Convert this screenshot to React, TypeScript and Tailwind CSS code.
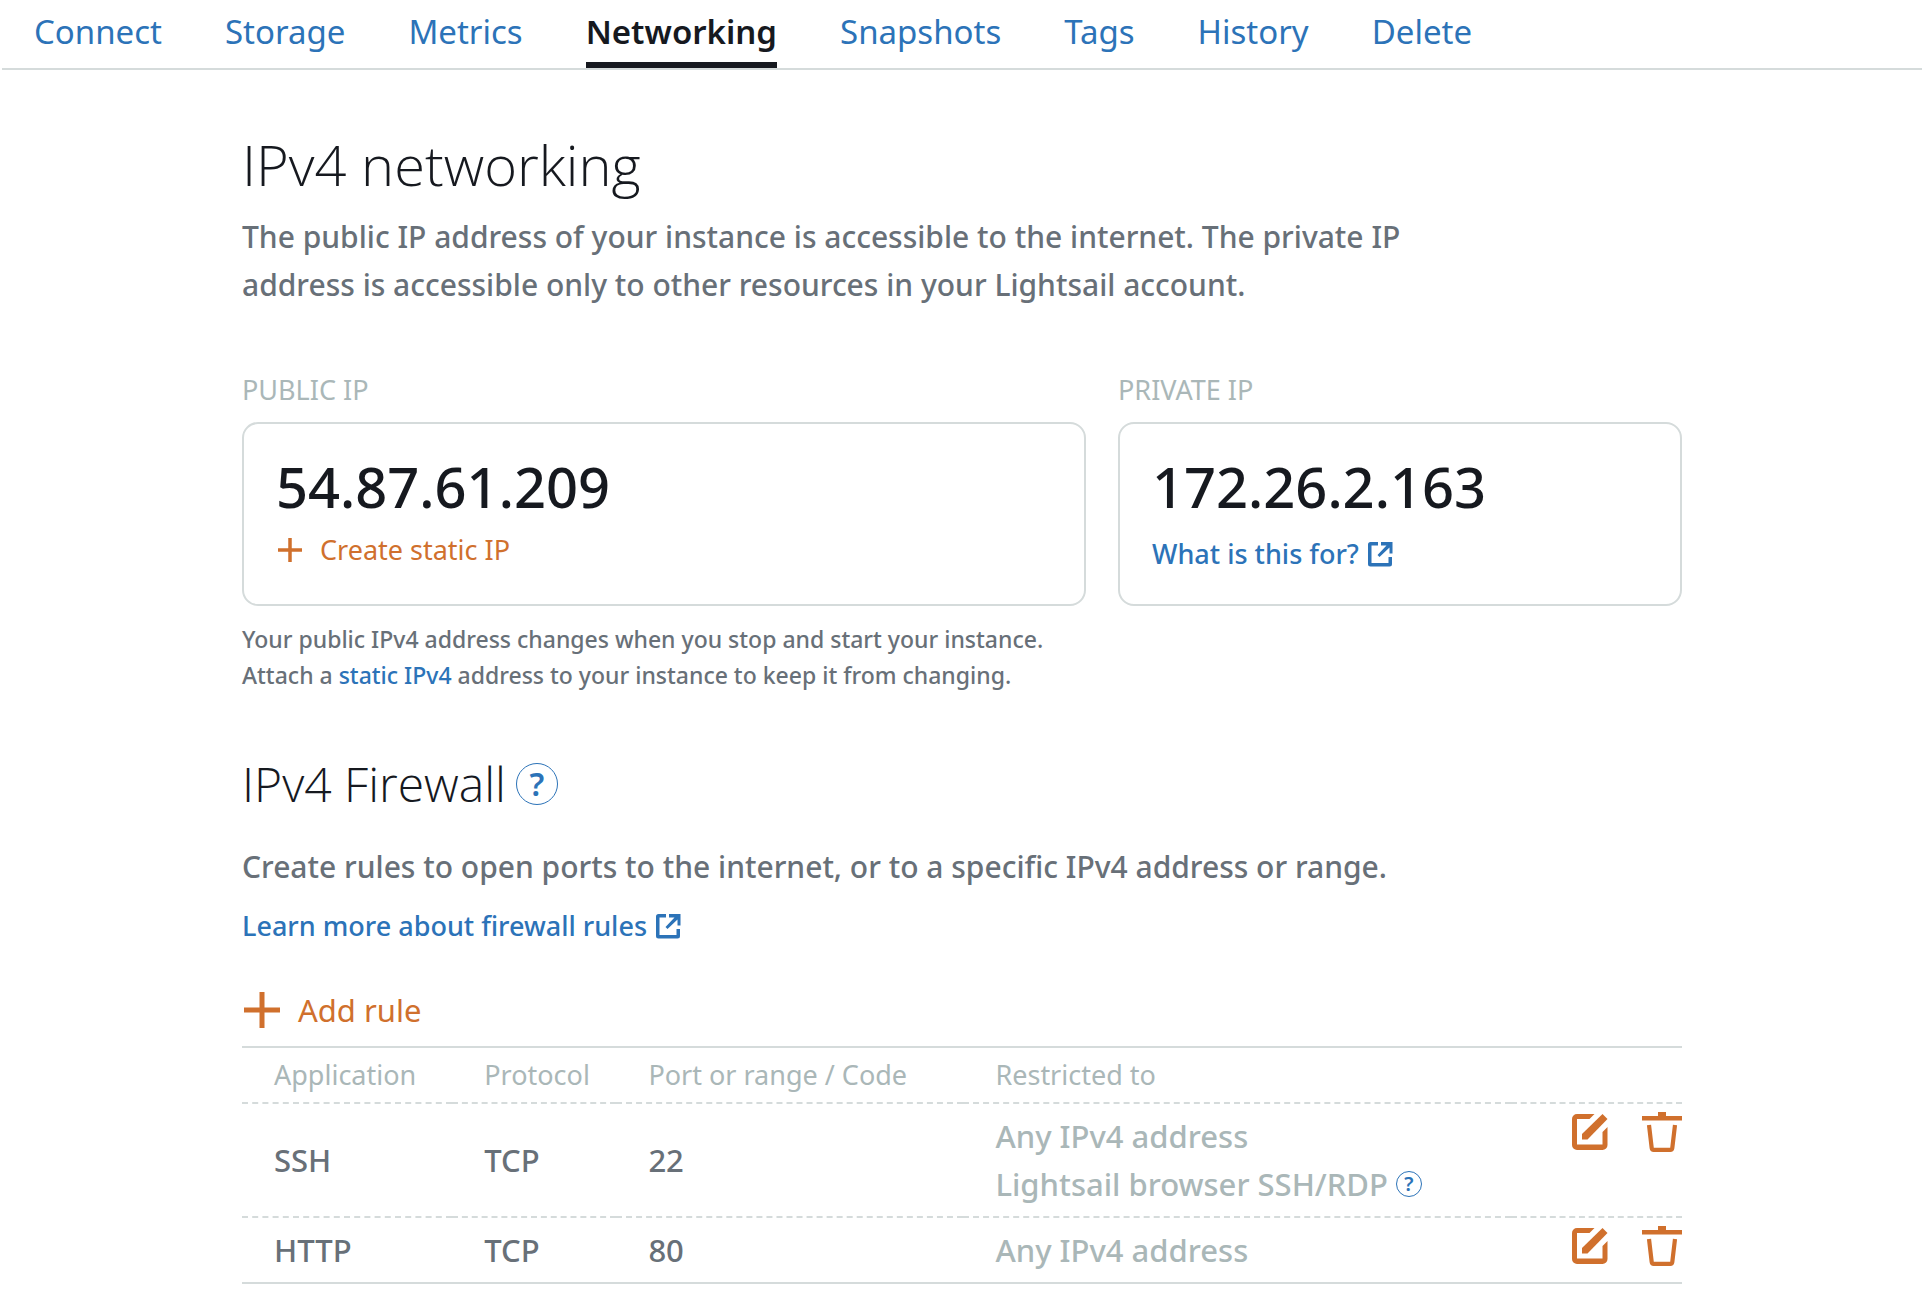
import React from "react";

const tabs = ["Connect", "Storage", "Metrics", "Networking", "Snapshots", "Tags", "History", "Delete"];

function ExternalIcon() {
  return (
    <svg viewBox="0 0 26 26" className="size-[26px] shrink-0" fill="currentColor" aria-hidden="true">
      <path d="M11 1V4.500H4.500V22H21.500V16H25V23a2.500 2.500 0 0 1-2.500 2.500H3.500A2.500 2.500 0 0 1 1 23V3.500A2.500 2.500 0 0 1 3.500 1Z" />
      <path d="M14 1H25.500V12.500H22.500V6.500L12.500 16 10.500 14 19.500 4.500H14Z" />
    </svg>
  );
}

function PlusIcon({ large = false }: { large?: boolean }) {
  return large ? (
    <svg viewBox="0 0 36 36" className="size-9 shrink-0" stroke="currentColor" strokeWidth="5" aria-hidden="true">
      <path d="M18 0V36M0 18H36" />
    </svg>
  ) : (
    <svg viewBox="0 0 24 24" className="size-6 shrink-0" stroke="currentColor" strokeWidth="3.500" aria-hidden="true">
      <path d="M12 0V24M0 12H24" />
    </svg>
  );
}

function EditIcon() {
  return (
    <svg viewBox="0 0 36 36" className="size-9" aria-hidden="true">
      <path d="M22.500 0 17.500 5H5V30.500H30.500V18L35.500 13V31a5 5 0 0 1-5 5H5a5 5 0 0 1-5-5V5a5 5 0 0 1 5-5Z" fill="currentColor" />
      <path d="M30.500 0 35.500 5 15.500 25.500H10V20Z" fill="currentColor" />
    </svg>
  );
}

function TrashIcon() {
  return (
    <svg viewBox="0 0 40 40" className="size-10" aria-hidden="true">
      <path d="M16 0H24V4H40V8.500H0V4H16Z" fill="currentColor" />
      <path d="M7 13 9.700 36a2 2 0 0 0 2 1.800H28.300a2 2 0 0 0 2-1.800L33 13" fill="none" stroke="currentColor" strokeWidth="4.200" />
    </svg>
  );
}

function Help({ small = false }: { small?: boolean }) {
  return small ? (
    <button aria-label="Help" className="flex size-[26px] items-center justify-center rounded-full border border-[#2c73b8] text-xl font-semibold text-[#2c73b8]">?</button>
  ) : (
    <button aria-label="Help" className="flex size-[42px] items-center justify-center rounded-full border border-[#2c73b8] text-[32px] font-semibold text-[#2c73b8]">?</button>
  );
}

const rules = [
  { app: "SSH", protocol: "TCP", port: "22", browser: true },
  { app: "HTTP", protocol: "TCP", port: "80", browser: false },
];

export default function App() {
  return (
    <div className="min-h-screen bg-white pr-2.5 pl-0.5 font-['Noto_Sans',sans-serif] text-[#16191f]">
      <nav className="flex gap-[63px] border-b-2 border-[#d5dbdb] px-8 text-[33px] leading-[48px]">
        {tabs.map((tab) =>
          tab === "Networking" ? (
            <a key={tab} href="#networking" aria-current="page" className="border-b-6 border-[#16191f] pt-2 pb-1.5 font-semibold">{tab}</a>
          ) : (
            <a key={tab} href={`#${tab.toLowerCase()}`} className="pt-2 text-[#2c73b8]">{tab}</a>
          ),
        )}
      </nav>

      <main className="mx-auto w-full max-w-[1440px] pb-8">
        <h1 className="pt-14 font-['Open_Sans',sans-serif] text-[56px] leading-[76px] font-light">IPv4 networking</h1>
        <p className="mt-[11px] max-w-[1200px] text-[30px] leading-12 font-medium text-[#687078]">
          The public IP address of your instance is accessible to the internet. The private IP address is accessible only to other resources in your Lightsail account.
        </p>

        <div className="mt-[61px] grid grid-cols-[844fr_564fr] gap-x-8">
          <section>
            <h2 className="text-[27px] leading-10 text-[#aab7b8]">PUBLIC IP</h2>
            <div className="mt-3 h-[184px] rounded-2xl border-2 border-[#d5dbdb] px-8 pt-6">
              <p className="text-[56px] leading-[76px] font-medium">54.87.61.209</p>
              <button className="mt-1.5 flex items-center gap-[18px] pl-0.5 text-[27px] leading-10 text-[#d0702d]"><PlusIcon />Create static IP</button>
            </div>
          </section>
          <section>
            <h2 className="text-[27px] leading-10 text-[#aab7b8]">PRIVATE IP</h2>
            <div className="mt-3 h-[184px] rounded-2xl border-2 border-[#d5dbdb] px-8 pt-6">
              <p className="text-[56px] leading-[76px] font-medium">172.26.2.163</p>
              <a href="#private-ip" className="mt-2.5 flex w-fit items-center gap-2 text-[27px] leading-10 font-medium text-[#2c73b8]">What is this for?<ExternalIcon /></a>
            </div>
          </section>
        </div>
        <p className="mt-[15px] text-[23px] leading-9 font-medium text-[#687078]">
          Your public IPv4 address changes when you stop and start your instance.<br />
          Attach a <a href="#static-ip" className="text-[#2c73b8]">static IPv4</a> address to your instance to keep it from changing.
        </p>

        <div className="mt-[59px] flex items-center gap-2.5">
          <h2 className="font-['Open_Sans',sans-serif] text-[48px] leading-[64px] font-light">IPv4 Firewall</h2>
          <Help />
        </div>
        <p className="mt-[27px] text-[30px] leading-12 font-medium text-[#687078]">Create rules to open ports to the internet, or to a specific IPv4 address or range.</p>
        <a href="#firewall-rules" className="mt-[15px] flex w-fit items-center gap-2 text-[27px] leading-10 font-medium text-[#2c73b8]">Learn more about firewall rules<ExternalIcon /></a>
        <button className="mt-10 flex items-center gap-[18px] pl-0.5 text-[31px] leading-12 text-[#d0702d]"><PlusIcon large />Add rule</button>

        <table className="mt-3 w-full table-fixed border-collapse border-y-2 border-[#d5dbdb] text-left">
          <colgroup>
            <col className="w-[14.600%]" /><col className="w-[11.400%]" /><col className="w-[24.100%]" /><col /><col className="w-[11.900%]" />
          </colgroup>
          <thead className="text-[27px] leading-[54px] text-[#aab7b8]">
            <tr>
              {["Application", "Protocol", "Port or range / Code", "Restricted to"].map((h) => (
                <th key={h} className="px-8 font-normal whitespace-nowrap">{h}</th>
              ))}
              <td />
            </tr>
          </thead>
          <tbody className="text-[31px] leading-12 font-medium text-[#687078]">
            {rules.map((r) => (
              <tr key={r.app} className="border-t-2 border-dashed border-[#d5dbdb]">
                <td className="px-8 py-2">{r.app}</td>
                <td className="px-8 py-2">{r.protocol}</td>
                <td className="px-8 py-2">{r.port}</td>
                <td className="px-8 py-2 text-[#aab7b8]">
                  Any IPv4 address
                  {r.browser && <span className="flex items-center gap-2">Lightsail browser SSH/RDP<Help small /></span>}
                </td>
                <td className="py-2 align-top text-[#d0702d]">
                  <div className="flex items-center justify-end gap-[34px]">
                    <button aria-label={`Edit ${r.app} rule`}><EditIcon /></button>
                    <button aria-label={`Delete ${r.app} rule`}><TrashIcon /></button>
                  </div>
                </td>
              </tr>
            ))}
          </tbody>
        </table>
      </main>
    </div>
  );
}
